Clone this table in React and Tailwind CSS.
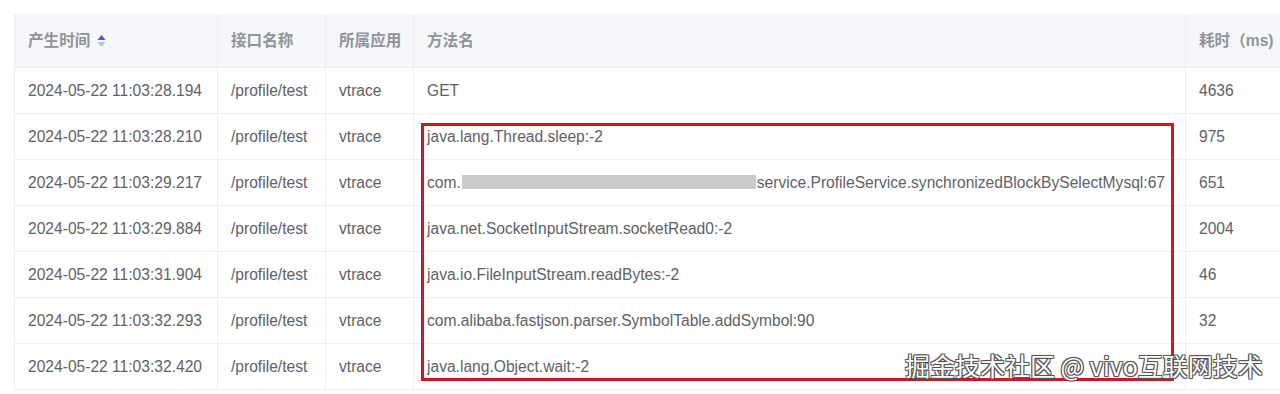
import React from 'react';

const rows = [
  { time: '2024-05-22 11:03:28.194', api: '/profile/test', app: 'vtrace', method: 'GET', cost: '4636' },
  { time: '2024-05-22 11:03:28.210', api: '/profile/test', app: 'vtrace', method: 'java.lang.Thread.sleep:-2', cost: '975' },
  { time: '2024-05-22 11:03:29.217', api: '/profile/test', app: 'vtrace', method: 'redacted', cost: '651' },
  { time: '2024-05-22 11:03:29.884', api: '/profile/test', app: 'vtrace', method: 'java.net.SocketInputStream.socketRead0:-2', cost: '2004' },
  { time: '2024-05-22 11:03:31.904', api: '/profile/test', app: 'vtrace', method: 'java.io.FileInputStream.readBytes:-2', cost: '46' },
  { time: '2024-05-22 11:03:32.293', api: '/profile/test', app: 'vtrace', method: 'com.alibaba.fastjson.parser.SymbolTable.addSymbol:90', cost: '32' },
  { time: '2024-05-22 11:03:32.420', api: '/profile/test', app: 'vtrace', method: 'java.lang.Object.wait:-2', cost: '' },
];

const grid = 'grid grid-cols-[203px_108px_88px_772px_1fr]';
const cell = 'px-[13px] flex items-center whitespace-nowrap border-r border-[#ebeef5]';

function SortIcon() {
  return (
    <svg width="9" height="14" viewBox="0 0 9 14" className="ml-[7px]">
      <path d="M4.5 1 L8.5 6 L0.5 6 Z" fill="#4a5bc4" />
      <path d="M4.5 13 L8.5 8 L0.5 8 Z" fill="#c0c4cc" />
    </svg>
  );
}

function MethodText({ m }) {
  if (m !== 'redacted') return m;
  return (
    <span className="flex items-center">
      com.
      <span className="inline-block w-[294px] h-[14px] bg-[#c9c9c9] mx-[1px]" />
      service.ProfileService.synchronizedBlockBySelectMysql:67
    </span>
  );
}

export default function App() {
  return (
    <div className="relative w-[1280px] h-[394px] bg-white overflow-hidden font-['Liberation_Sans','Noto_Sans_CJK_SC',sans-serif] text-[15.6px]">
      <div className="pl-[14px] pt-[14px]">
        <div className="w-[1320px] border-l border-[#ebeef5]">
          <div className={`${grid} h-[54px] bg-[#f5f7fa] border-b border-[#ebeef5] text-[#909399] font-bold`}>
            <div className={cell}>产生时间<SortIcon /></div>
            <div className={cell}>接口名称</div>
            <div className={cell}>所属应用</div>
            <div className={cell}>方法名</div>
            <div className={cell}>耗时（ms)</div>
          </div>
          {rows.map(r => (
            <div key={r.time} className={`${grid} h-[46px] border-b border-[#ebeef5] text-[#606266]`}>
              <div className={cell}>{r.time}</div>
              <div className={cell}>{r.api}</div>
              <div className={cell}>{r.app}</div>
              <div className={cell}><MethodText m={r.method} /></div>
              <div className={cell}>{r.cost}</div>
            </div>
          ))}
        </div>
      </div>

      {/* highlight box */}
      <div className="absolute left-[421px] top-[123px] w-[753px] h-[258px] border-[3px] border-[#d0161f]" />

      {/* watermark */}
      <div className="absolute left-[905px] top-[348px] text-[25px] leading-[34px] text-white font-['Noto_Sans_CJK_SC',sans-serif] [text-shadow:1px_1px_0_#555,-1px_-1px_0_#555,1px_-1px_0_#555,-1px_1px_0_#555,0_0_2px_#333]">
        掘金技术社区 @ vivo互联网技术
      </div>
    </div>
  );
}
